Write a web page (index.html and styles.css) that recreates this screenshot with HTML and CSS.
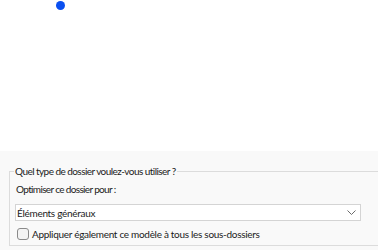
FILE: index.html
```html
<!DOCTYPE html>
<html lang="fr">
<head>
<meta charset="utf-8">
<link rel="stylesheet" href="styles.css">
</head>
<body>
<div class="top">
  <span class="dot"></span>
</div>
<div class="bottom">
  <fieldset class="group">
    <legend class="legend">Quel type de dossier voulez-vous utiliser ?</legend>
    <div class="label">Optimiser ce dossier pour :</div>
    <div class="select">
      <span class="select-text">Éléments généraux</span>
      <svg class="chev" width="9" height="5" viewBox="0 0 9 5"><path d="M0.5 0.5 L4.5 4.5 L8.5 0.5" fill="none" stroke="#6b6b6b" stroke-width="1"/></svg>
    </div>
    <label class="check">
      <span class="box"></span>
      <span class="check-text">Appliquer également ce modèle à tous les sous-dossiers</span>
    </label>
  </fieldset>
</div>
</body>
</html>
```
FILE: styles.css
```css
html, body {
  margin: 0;
  padding: 0;
}
body {
  width: 378px;
  height: 250px;
  overflow: hidden;
  font-family: Lato, "Liberation Sans", sans-serif;
  font-size: 10px;
  letter-spacing: -0.3px;
  color: #1b1b1b;
  background: #ffffff;
}
.top {
  height: 151px;
  background: #ffffff;
  padding: 1px 0 0 56px;
  box-sizing: border-box;
}
.dot {
  display: block;
  width: 9px;
  height: 9px;
  border-radius: 50%;
  background: #0a4ff0;
}
.bottom {
  height: 99px;
  background: #f9f9f9;
  padding: 13px 0 0 9px;
  box-sizing: border-box;
}
.group {
  margin: 0;
  padding: 2px 0 5px 5px;
  border: 1px solid #dcdcdc;
  border-right: none;
  min-width: 0;
}
.legend {
  padding: 0 1px;
  margin-left: -1px;
  line-height: 14px;
  letter-spacing: -0.55px;
}
.label {
  line-height: 14px;
  margin: 2px 0 0 1px;
  letter-spacing: -0.65px;
}
.select {
  margin-top: 8px;
  width: 346px;
  height: 17px;
  box-sizing: border-box;
  background: #ffffff;
  border: 1px solid #d4d4d4;
  display: flex;
  align-items: center;
  justify-content: space-between;
  padding: 0 4px 0 1px;
}
.chev {
  display: block;
}
.check {
  margin-top: 7px;
  display: flex;
  align-items: center;
  gap: 3px;
  padding-left: 2px;
}
.box {
  width: 12px;
  height: 12px;
  box-sizing: border-box;
  border: 1px solid #8a8a8a;
  border-radius: 3px;
  background: #f3f3f3;
}
```
